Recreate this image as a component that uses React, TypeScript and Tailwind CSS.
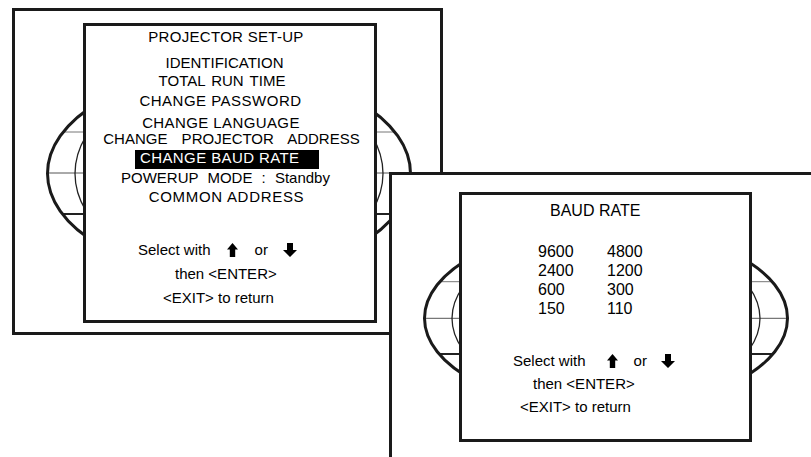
const UpArrow = () => (
  <svg width="11" height="14" viewBox="0 0 11 14" className="block">
    <polygon points="5.5,0 11,6.5 8.2,6.5 8.2,14 2.8,14 2.8,6.5 0,6.5" fill="#000" />
  </svg>
);

const DownArrow = () => (
  <svg width="14" height="14" viewBox="0 0 14 14" className="block">
    <polygon points="4,0 10,0 10,7 14,7 7,14 0,7 4,7" fill="#000" />
  </svg>
);

// the curved "screen" drawn behind each menu box
function Screen({ w, h, cy, ry, iry, lines }: { w: number; h: number; cy: number; ry: number; iry: number; lines: number[] }) {
  return (
    <svg className="absolute left-0 top-0" width={w} height={h} viewBox={`0 0 ${w} ${h}`}>
      <defs>
        <clipPath id={`clip-${cy}`}>
          <ellipse cx="214" cy={cy} rx="181" ry={ry} />
        </clipPath>
      </defs>
      <g clipPath={`url(#clip-${cy})`}>
        <line x1="0" x2={w} y1={lines[0]} y2={lines[0]} stroke="#777" strokeWidth="1" />
        <line x1="0" x2={w} y1={lines[1]} y2={lines[1]} stroke="#555" strokeWidth="1" />
        <line x1="0" x2={w} y1={lines[2]} y2={lines[2]} stroke="#222" strokeWidth="2" />
      </g>
      <ellipse cx="214" cy={cy} rx="154" ry={iry} fill="none" stroke="#222" strokeWidth="1.3" />
      <ellipse cx="214" cy={cy} rx="181.5" ry={ry} fill="none" stroke="#1a1a1a" strokeWidth="3" />
    </svg>
  );
}

export default function App() {
  return (
    <div className="relative h-[457px] w-[811px] overflow-hidden bg-white font-['Liberation_Sans',Arial,sans-serif] text-[15px] text-black">
      <div className="pl-[12px] pt-[8px]">
        <div className="relative h-[327px] w-[431px] border-[3px] border-[#1a1a1a] pl-[68px] pt-[12px]">
          <Screen w={425} h={321} cy={162.5} ry={102} iry={101} lines={[121, 162, 203]} />
          <div className="relative flex h-[300px] w-[294px] flex-col items-center border-[3px] border-[#1a1a1a] bg-white pr-[8px] leading-4">
            <div className="mt-[3px] tracking-[0.3px]">PROJECTOR SET-UP</div>
            <div className="mr-[3px] mt-[10px]">IDENTIFICATION</div>
            <div className="mr-[8px] mt-[2px] [word-spacing:2px]">TOTAL RUN TIME</div>
            <div className="mr-[11px] mt-[4px] tracking-[0.5px]">CHANGE PASSWORD</div>
            <div className="mr-[10px] mt-[6px] tracking-[0.4px]">CHANGE LANGUAGE</div>
            <div className="ml-[11px] [word-spacing:10px]">CHANGE PROJECTOR ADDRESS</div>
            <div className="ml-[2px] mt-[3px] h-[19px] w-[184px] bg-black pl-[5px] tracking-[0.4px] text-white">
              CHANGE BAUD RATE
            </div>
            <div className="mr-[1px] mt-[1px] [word-spacing:5px]">POWERUP MODE : Standby</div>
            <div className="ml-[1px] mt-[3px] tracking-[0.7px]">COMMON ADDRESS</div>
            <div className="ml-[52px] mt-[37px] flex h-4 items-center self-start">
              <span>Select with</span>
              <span className="ml-[16px]"><UpArrow /></span>
              <span className="ml-[17px]">or</span>
              <span className="ml-[15px]"><DownArrow /></span>
            </div>
            <div className="ml-[89px] mt-[8px] self-start">then &lt;ENTER&gt;</div>
            <div className="ml-[77px] mt-[8px] self-start">&lt;EXIT&gt; to return</div>
          </div>
        </div>
      </div>

      <div className="absolute left-[389px] top-[172px] h-[300px] w-[440px] border-[3px] border-[#1a1a1a] bg-white pl-[67px] pt-[17px]">
        <Screen w={434} h={294} cy={143.3} ry={91} iry={85} lines={[106.7, 143.3, 179]} />
        <div className="relative flex h-[250px] w-[293px] flex-col items-start border-[3px] border-[#1a1a1a] bg-white leading-4">
          <div className="ml-[88px] mt-[8px] text-[16px]">BAUD RATE</div>
          <div className="ml-[76px] mt-[23px] grid grid-cols-[69px_auto] text-[16px] leading-[19px]">
            <span>9600</span>
            <span>4800</span>
            <span>2400</span>
            <span>1200</span>
            <span>600</span>
            <span>300</span>
            <span>150</span>
            <span>110</span>
          </div>
          <div className="ml-[51px] mt-[35px] flex h-4 items-center">
            <span>Select with</span>
            <span className="ml-[21px]"><UpArrow /></span>
            <span className="ml-[16px]">or</span>
            <span className="ml-[14px]"><DownArrow /></span>
          </div>
          <div className="ml-[71px] mt-[7px]">then &lt;ENTER&gt;</div>
          <div className="ml-[58px] mt-[7px]">&lt;EXIT&gt; to return</div>
        </div>
      </div>
    </div>
  );
}
